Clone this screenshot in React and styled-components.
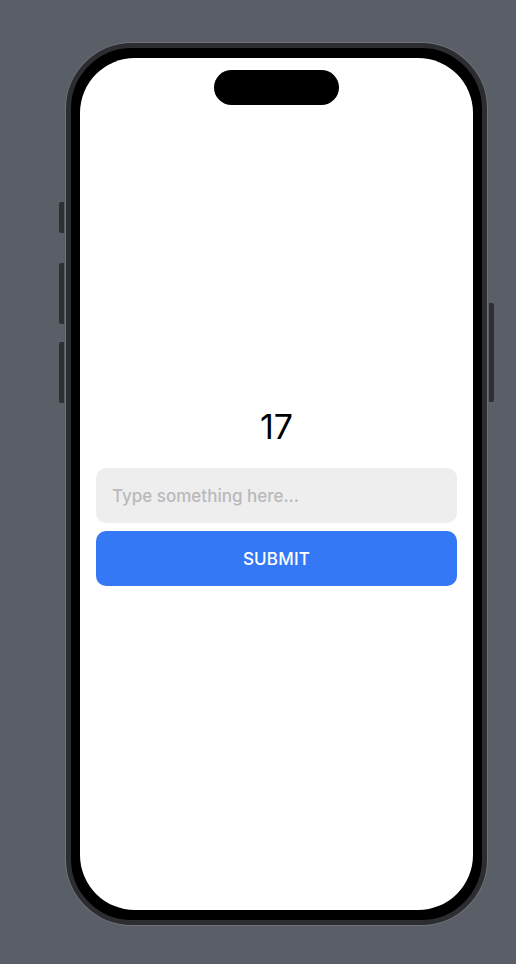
import React from "react";
import styled, { createGlobalStyle } from "styled-components";

const GlobalStyle = createGlobalStyle`
  html, body {
    margin: 0;
    padding: 0;
    background: #5a5e66;
    font-family: Inter, "Noto Sans", "Liberation Sans", sans-serif;
  }
`;

const Page = styled.div`
  width: 516px;
  height: 964px;
  box-sizing: border-box;
  padding: 43px 0 0 66px;
  overflow: hidden;
`;

const Phone = styled.div`
  position: relative;
  width: 421px;
  height: 882px;
  box-sizing: border-box;
  border-radius: 66px;
  background: #000;
  border: 5px solid #2c2d30;
  box-shadow: 0 0 0 1px #6f7278;
  padding: 10px 9px;
`;

// hardware buttons sit outside the frame edge
const SideButton = styled.div`
  position: absolute;
  width: 5px;
  top: ${(p) => p.top}px;
  height: ${(p) => p.len}px;
  ${(p) => (p.right ? "right: -12px;" : "left: -12px;")}
  background: #2e3034;
  border-radius: ${(p) => (p.right ? "0 2px 2px 0" : "2px 0 0 2px")};
`;

const Screen = styled.div`
  width: 393px;
  height: 852px;
  background: #fff;
  border-radius: 55px;
  overflow: hidden;
  display: flex;
  flex-direction: column;
  box-sizing: border-box;
  padding: 12px 16px 0;
`;

const Island = styled.div`
  align-self: center;
  width: 125px;
  height: 35px;
  border-radius: 18px;
  background: #000;
`;

const Content = styled.div`
  display: flex;
  flex-direction: column;
  gap: 8px;
  padding-top: 302px;
`;

const Counter = styled.div`
  text-align: center;
  font-size: 34px;
  line-height: 40px;
  color: #000;
  margin-bottom: 13px;
`;

const Input = styled.input`
  height: 55px;
  border: none;
  outline: none;
  border-radius: 10px;
  background: #eeeeee;
  padding: 0 16px;
  font-family: Inter, "Noto Sans", "Liberation Sans", sans-serif;
  font-size: 17px;
  font-weight: 500;
  color: #222;
  box-sizing: border-box;
  &::placeholder {
    color: #b9b9bc;
  }
`;

const Button = styled.button`
  height: 55px;
  border: none;
  border-radius: 10px;
  background: #3478f6;
  color: #fff;
  font-family: Inter, "Noto Sans", "Liberation Sans", sans-serif;
  font-size: 17px;
  font-weight: 500;
  letter-spacing: 0.2px;
`;

export default function App() {
  return (
    <Page>
      <GlobalStyle />
      <Phone>
        <SideButton top={154} len={31} />
        <SideButton top={215} len={61} />
        <SideButton top={294} len={61} />
        <SideButton right top={255} len={99} />
        <Screen>
          <Island />
          <Content>
            <Counter>17</Counter>
            <Input placeholder="Type something here..." />
            <Button>SUBMIT</Button>
          </Content>
        </Screen>
      </Phone>
    </Page>
  );
}
